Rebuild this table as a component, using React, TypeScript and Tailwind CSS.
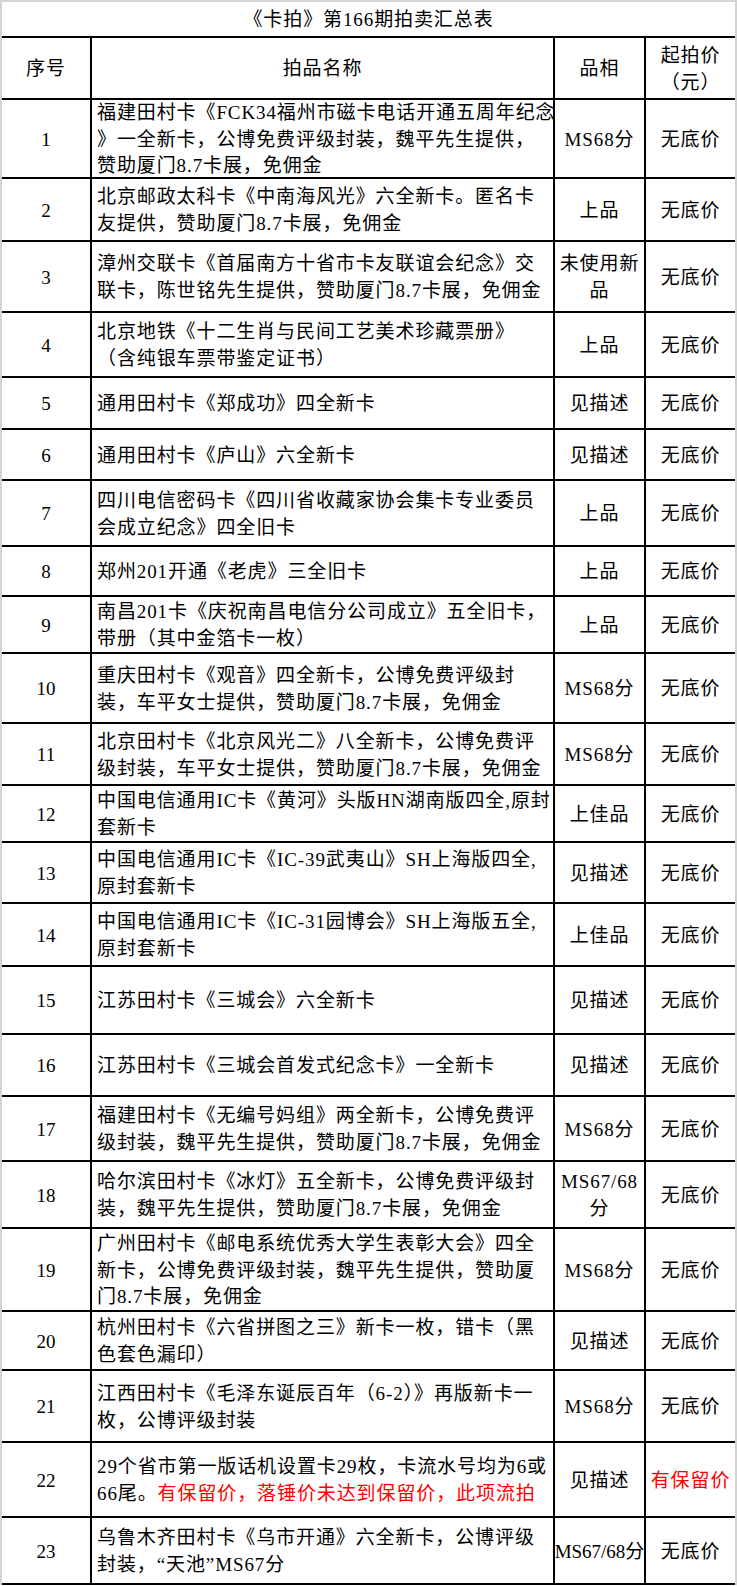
import React from "react";

type Row = {
  n: string;
  lines: React.ReactNode[];
  grade: string[];
  price: React.ReactNode;
  h: string;
  gradeTight?: boolean;
};

const red = (t: string) => <span className="text-[#ff0000]">{t}</span>;

const rows: Row[] = [
  { n: "1", h: "h-[79px]", lines: ["福建田村卡《FCK34福州市磁卡电话开通五周年纪念", "》一全新卡，公博免费评级封装，魏平先生提供，", "赞助厦门8.7卡展，免佣金"], grade: ["MS68分"], price: "无底价" },
  { n: "2", h: "h-[63px]", lines: ["北京邮政太科卡《中南海风光》六全新卡。匿名卡", "友提供，赞助厦门8.7卡展，免佣金"], grade: ["上品"], price: "无底价" },
  { n: "3", h: "h-[71px]", lines: ["漳州交联卡《首届南方十省市卡友联谊会纪念》交", "联卡，陈世铭先生提供，赞助厦门8.7卡展，免佣金"], grade: ["未使用新", "品"], price: "无底价" },
  { n: "4", h: "h-[65px]", lines: ["北京地铁《十二生肖与民间工艺美术珍藏票册》", "（含纯银车票带鉴定证书）"], grade: ["上品"], price: "无底价" },
  { n: "5", h: "h-[52px]", lines: ["通用田村卡《郑成功》四全新卡"], grade: ["见描述"], price: "无底价" },
  { n: "6", h: "h-[51px]", lines: ["通用田村卡《庐山》六全新卡"], grade: ["见描述"], price: "无底价" },
  { n: "7", h: "h-[66px]", lines: ["四川电信密码卡《四川省收藏家协会集卡专业委员", "会成立纪念》四全旧卡"], grade: ["上品"], price: "无底价" },
  { n: "8", h: "h-[50px]", lines: ["郑州201开通《老虎》三全旧卡"], grade: ["上品"], price: "无底价" },
  { n: "9", h: "h-[57px]", lines: ["南昌201卡《庆祝南昌电信分公司成立》五全旧卡，", "带册（其中金箔卡一枚）"], grade: ["上品"], price: "无底价" },
  { n: "10", h: "h-[70px]", lines: ["重庆田村卡《观音》四全新卡，公博免费评级封", "装，车平女士提供，赞助厦门8.7卡展，免佣金"], grade: ["MS68分"], price: "无底价" },
  { n: "11", h: "h-[62px]", lines: ["北京田村卡《北京风光二》八全新卡，公博免费评", "级封装，车平女士提供，赞助厦门8.7卡展，免佣金"], grade: ["MS68分"], price: "无底价" },
  { n: "12", h: "h-[57px]", lines: ["中国电信通用IC卡《黄河》头版HN湖南版四全,原封", "套新卡"], grade: ["上佳品"], price: "无底价" },
  { n: "13", h: "h-[61px]", lines: ["中国电信通用IC卡《IC-39武夷山》SH上海版四全,", "原封套新卡"], grade: ["见描述"], price: "无底价" },
  { n: "14", h: "h-[63px]", lines: ["中国电信通用IC卡《IC-31园博会》SH上海版五全,", "原封套新卡"], grade: ["上佳品"], price: "无底价" },
  { n: "15", h: "h-[68px]", lines: ["江苏田村卡《三城会》六全新卡"], grade: ["见描述"], price: "无底价" },
  { n: "16", h: "h-[62px]", lines: ["江苏田村卡《三城会首发式纪念卡》一全新卡"], grade: ["见描述"], price: "无底价" },
  { n: "17", h: "h-[65px]", lines: ["福建田村卡《无编号妈组》两全新卡，公博免费评", "级封装，魏平先生提供，赞助厦门8.7卡展，免佣金"], grade: ["MS68分"], price: "无底价" },
  { n: "18", h: "h-[67px]", lines: ["哈尔滨田村卡《冰灯》五全新卡，公博免费评级封", "装，魏平先生提供，赞助厦门8.7卡展，免佣金"], grade: ["MS67/68", "分"], price: "无底价" },
  { n: "19", h: "h-[83px]", lines: ["广州田村卡《邮电系统优秀大学生表彰大会》四全", "新卡，公博免费评级封装，魏平先生提供，赞助厦", "门8.7卡展，免佣金"], grade: ["MS68分"], price: "无底价" },
  { n: "20", h: "h-[59px]", lines: ["杭州田村卡《六省拼图之三》新卡一枚，错卡（黑", "色套色漏印）"], grade: ["见描述"], price: "无底价" },
  { n: "21", h: "h-[72px]", lines: ["江西田村卡《毛泽东诞辰百年（6-2）》再版新卡一", "枚，公博评级封装"], grade: ["MS68分"], price: "无底价" },
  { n: "22", h: "h-[75px]", lines: ["29个省市第一版话机设置卡29枚，卡流水号均为6或", <>66尾。{red("有保留价，落锤价未达到保留价，此项流拍")}</>], grade: ["见描述"], price: red("有保留价") },
  { n: "23", h: "h-[67px]", lines: ["乌鲁木齐田村卡《乌市开通》六全新卡，公博评级", "封装，“天池”MS67分"], grade: ["MS67/68分"], price: "无底价", gradeTight: true },
];

export default function App() {
  return (
    <div className="w-[737px] bg-white text-black border-l-2 border-r-2 border-t-2 border-[#d4d4d4] font-[family-name:'Liberation_Serif','Noto_Sans_CJK_SC',serif] text-[19px] tracking-[0.9px] leading-[26.7px]">
      <div className="h-[36px] border-b-2 border-black flex items-center justify-center pt-[2px]">
        《卡拍》第166期拍卖汇总表
      </div>
      <div className="h-[62px] border-b-2 border-black flex">
        <div className="w-[90px] border-r-2 border-black flex items-center justify-center pt-[3px]">序号</div>
        <div className="w-[463px] border-r-2 border-black flex items-center justify-center pt-[3px]">拍品名称</div>
        <div className="w-[91px] border-r-2 border-black flex items-center justify-center pt-[3px]">品相</div>
        <div className="flex-1 flex flex-col items-center justify-center pt-[3px]">
          <div>起拍价</div>
          <div>（元）</div>
        </div>
      </div>
      {rows.map((r) => (
        <div key={r.n} className={`${r.h} border-b-2 border-black flex`}>
          <div className="w-[90px] border-r-2 border-black flex items-center justify-center pt-[3px] tracking-normal">
            {r.n}
          </div>
          <div className="w-[463px] border-r-2 border-black flex flex-col justify-center pl-[5px] pt-[3px] whitespace-nowrap">
            {r.lines.map((l, i) => (
              <div key={i}>{l}</div>
            ))}
          </div>
          <div
            className={`w-[91px] border-r-2 border-black flex flex-col items-center justify-center pt-[3px] whitespace-nowrap ${
              r.gradeTight ? "tracking-normal" : ""
            }`}
          >
            {r.grade.map((g, i) => (
              <div key={i}>{g}</div>
            ))}
          </div>
          <div className="flex-1 flex items-center justify-center pt-[3px] whitespace-nowrap">{r.price}</div>
        </div>
      ))}
    </div>
  );
}
